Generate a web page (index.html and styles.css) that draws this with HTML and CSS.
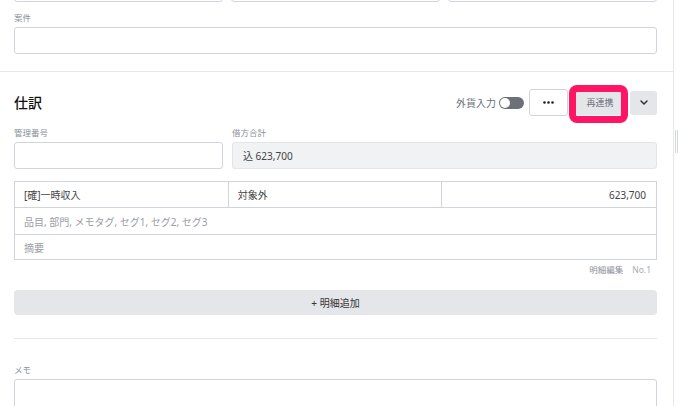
FILE: index.html
```html
<!DOCTYPE html>
<html lang="ja">
<head>
<meta charset="utf-8">
<link rel="stylesheet" href="styles.css">
</head>
<body>
<div class="page">
  <main class="main">
    <section class="section section-top">
      <div class="row3">
        <div class="input"></div>
        <div class="input"></div>
        <div class="input"></div>
      </div>
      <div class="field field-first">
        <div class="label">案件</div>
        <div class="input"></div>
      </div>
    </section>
    <section class="section section-journal">
      <div class="head">
        <h2 class="title">仕訳</h2>
        <div class="actions">
          <span class="fx-label">外貨入力</span>
          <span class="toggle"><span class="knob"></span></span>
          <button class="btn btn-more">
            <svg width="11" height="3" viewBox="0 0 11 3"><circle cx="1.5" cy="1.5" r="1.3" fill="#222"/><circle cx="5.5" cy="1.5" r="1.3" fill="#222"/><circle cx="9.5" cy="1.5" r="1.3" fill="#222"/></svg>
          </button>
          <span class="relink-wrap">
            <button class="btn btn-gray btn-relink">再連携</button>
            <span class="highlight"></span>
          </span>
          <button class="btn btn-gray btn-caret">
            <svg width="8" height="5" viewBox="0 0 8 5"><path d="M1 1l3 3 3-3" fill="none" stroke="#333" stroke-width="1.5" stroke-linecap="round" stroke-linejoin="round"/></svg>
          </button>
        </div>
      </div>
      <div class="row2">
        <div class="field">
          <div class="label">管理番号</div>
          <div class="input"></div>
        </div>
        <div class="field">
          <div class="label">借方合計</div>
          <div class="input input-readonly">込 623,700</div>
        </div>
      </div>
      <div class="table">
        <div class="tr tr1">
          <div class="td">[確]一時収入</div>
          <div class="td">対象外</div>
          <div class="td td-num">623,700</div>
        </div>
        <div class="tr tr2">
          <div class="td td-muted">品目, 部門, メモタグ, セグ1, セグ2, セグ3</div>
        </div>
        <div class="tr tr3">
          <div class="td td-muted">摘要</div>
        </div>
      </div>
      <div class="meta"><span>明細編集</span><span class="meta-no">No.1</span></div>
      <button class="btn-add">+ 明細追加</button>
      <hr class="divider">
      <div class="field field-memo">
        <div class="label">メモ</div>
        <div class="input input-memo"></div>
      </div>
    </section>
  </main>
  <aside class="side"><span class="grip"></span></aside>
</div>
</body>
</html>
```
FILE: styles.css
```css
* { box-sizing: border-box; }
html, body { margin: 0; padding: 0; background: #fff; overflow: hidden; }
body {
  font-family: "Noto Sans", "Noto Sans CJK JP", sans-serif;
  color: #333;
  font-size: 10px;
}
.page { display: flex; height: 406px; }
.main {
  width: 674px;
  border-right: 1px solid #e6e7ea;
  flex: none;
}
.side { flex: 1; padding-top: 130px; display: flex; justify-content: center; }
.grip {
  width: 3px; height: 23px;
  border-left: 1px solid #d6d8dc;
  border-right: 1px solid #d6d8dc;
}
.section { padding: 0 16px 0 14px; }
.section-top { margin-top: -25px; padding-bottom: 17px; }
.section-journal { border-top: 1px solid #e6e7ea; padding-top: 17px; }

.row3 { display: grid; grid-template-columns: 1fr 1fr 1fr; gap: 8px; }
.input {
  height: 27px;
  border: 1px solid #d2d4db;
  border-radius: 3px;
  background: #fff;
}
.field-first { margin-top: 10px; }
.label {
  font-size: 8.5px;
  line-height: 12px;
  color: #8b8f98;
  margin-bottom: 3px;
}

.head { display: flex; align-items: center; justify-content: space-between; height: 27px; }
.title { margin: 0; font-size: 14px; font-weight: 500; color: #111; line-height: 20px; padding-top: 1px; }
.actions { display: flex; align-items: center; }
.fx-label { font-size: 10px; color: #6b6f78; margin-right: 3px; }
.toggle {
  width: 25px; height: 12px; border-radius: 6px; background: #6e7079;
  display: inline-flex; align-items: center; padding: 1px; margin-right: 5px;
}
.knob { width: 10px; height: 10px; border-radius: 50%; background: #fff; }
.btn {
  font-family: inherit;
  border: 0; padding: 0; margin: 0;
  display: inline-flex; align-items: center; justify-content: center;
  cursor: pointer;
}
.btn-more {
  width: 39px; height: 27px;
  background: #fff;
  border: 1px solid #d2d4db;
  border-radius: 3px;
}
.btn-gray { background: #e5e6ea; border-radius: 3px; height: 24px; }
.relink-wrap { position: relative; margin-left: 5px; display: inline-flex; }
.btn-relink { width: 54px; font-size: 9px; color: #6c707a; }
.highlight {
  position: absolute;
  left: -4px; right: -1px; top: -6px; bottom: -8px;
  border: 7px solid #ff1563;
  border-radius: 8px;
  pointer-events: none;
}
.btn-caret { width: 27px; margin-left: 3px; }

.row2 { display: flex; gap: 9px; margin-top: 11px; }
.row2 .field:first-child { width: 209px; flex: none; }
.row2 .field:last-child { flex: 1; }
.input-readonly {
  background: #f1f2f4;
  border-color: #e4e5e9;
  display: flex; align-items: center;
  padding-left: 10px;
  font-size: 10px; color: #444;
}

.table {
  margin-top: 12px;
  border: 1px solid #d2d4db;
}
.tr { display: flex; border-bottom: 1px solid #d2d4db; }
.tr:last-child { border-bottom: 0; }
.tr1 { height: 26px; }
.tr2 { height: 27px; }
.tr3 { height: 24px; }
.td {
  flex: 1;
  display: flex; align-items: center;
  padding: 0 9px;
  font-size: 10px; color: #444;
}
.tr1 .td + .td { border-left: 1px solid #d2d4db; }
.td-num { justify-content: flex-end; padding-right: 10px; }
.td-muted { color: #9a9da5; }

.meta {
  margin-top: 4px;
  text-align: right;
  font-size: 8.5px; line-height: 12px;
  color: #8b8f98;
  padding-right: 6px;
}
.meta-no { margin-left: 9px; color: #a8abb2; }

.btn-add {
  display: block; width: 100%;
  margin-top: 14px;
  height: 25px;
  border: 0; border-radius: 4px;
  background: #e5e6ea;
  font-family: inherit; font-size: 10px; color: #333;
}
.divider { border: 0; border-top: 1px solid #e6e7ea; margin: 23px 0 0; }
.field-memo { margin-top: 25px; }
.input-memo { height: 40px; }
```
